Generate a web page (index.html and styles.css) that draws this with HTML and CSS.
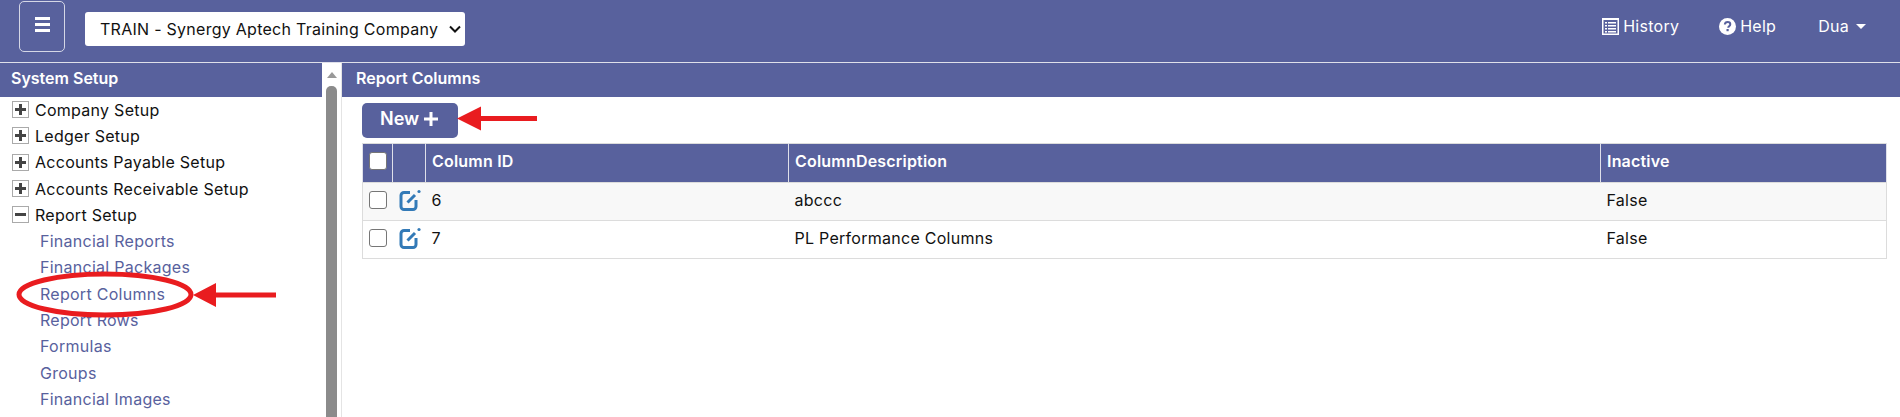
FILE: index.html
```html
<!DOCTYPE html>
<html>
<head>
    <title>Report Columns</title>
    <link rel="stylesheet" href="styles.css">
</head>
<body>
<div class="topbar">
    <button class="menu-button">
        <svg width="15" height="15" viewBox="0 0 15 15"><path d="M0 0h15v3H0zM0 6h15v3H0zM0 12h15v3H0z" fill="#fff"/></svg>
    </button>
    <div class="select-wrap">
        <select class="company-select">
            <option>TRAIN - Synergy Aptech Training Company</option>
        </select>
        <svg class="select-arrow" width="12" height="8" viewBox="0 0 12 8"><path d="M1 1.500l5 5 5-5" fill="none" stroke="#111" stroke-width="2"/></svg>
    </div>
    <div class="topbar-links">
        <a class="top-link link-history">
            <svg width="17" height="17" viewBox="0 0 17 17"><path fill="#fff" fill-rule="evenodd" d="M0 0h17v17H0zM1.500 2v13.500h14V2zM3 4h2v1.500H3zM6 4h8v1.500H6zM3 7h2v1.500H3zM6 7h8v1.500H6zM3 10h2v1.500H3zM6 10h8v1.500H6zM3 13h2v1.500H3zM6 13h8v1.500H6z"/></svg>
            History
        </a>
        <a class="top-link link-help">
            <svg width="17" height="17" viewBox="0 0 17 17"><circle cx="8.500" cy="8.500" r="8.500" fill="#fff"/><path d="M5.800 6.500c.2-1.700 1.300-2.500 2.800-2.500s2.700.9 2.700 2.300c0 1.900-2.100 1.900-2.100 3.400" fill="none" stroke="#58619d" stroke-width="2"/><rect x="7.500" y="11" width="2.200" height="2.200" fill="#58619d"/></svg>
            Help
        </a>
        <a class="top-link link-user">Dua <span class="caret"></span></a>
    </div>
</div>

<div class="page">
    <div class="sidebar">
        <div class="panel-title">System Setup</div>
        <ul class="tree">
            <li class="tree-node"><span class="toggle"><svg width="11" height="11" viewBox="0 0 11 11"><path d="M4 0h3v4h4v3H7v4H4V7H0V4h4z" fill="#444"/></svg></span>Company Setup</li>
            <li class="tree-node"><span class="toggle"><svg width="11" height="11" viewBox="0 0 11 11"><path d="M4 0h3v4h4v3H7v4H4V7H0V4h4z" fill="#444"/></svg></span>Ledger Setup</li>
            <li class="tree-node"><span class="toggle"><svg width="11" height="11" viewBox="0 0 11 11"><path d="M4 0h3v4h4v3H7v4H4V7H0V4h4z" fill="#444"/></svg></span>Accounts Payable Setup</li>
            <li class="tree-node"><span class="toggle"><svg width="11" height="11" viewBox="0 0 11 11"><path d="M4 0h3v4h4v3H7v4H4V7H0V4h4z" fill="#444"/></svg></span>Accounts Receivable Setup</li>
            <li class="tree-node"><span class="toggle"><svg width="11" height="11" viewBox="0 0 11 11"><path d="M0 4h11v3H0z" fill="#444"/></svg></span>Report Setup</li>
            <li class="tree-leaf">Financial Reports</li>
            <li class="tree-leaf">Financial Packages</li>
            <li class="tree-leaf">Report Columns</li>
            <li class="tree-leaf">Report Rows</li>
            <li class="tree-leaf">Formulas</li>
            <li class="tree-leaf">Groups</li>
            <li class="tree-leaf">Financial Images</li>
        </ul>
    </div>
    <div class="scrollbar">
        <span class="scroll-up"></span>
        <span class="scroll-thumb"></span>
    </div>
    <div class="main">
        <div class="panel-title panel-title-main">Report Columns</div>
        <div class="content">
            <button class="new-button">New
                <svg width="14" height="14" viewBox="0 0 14 14"><path d="M5.500 0h3v5.500H14v3H8.500V14h-3V8.500H0v-3h5.500z" fill="#fff"/></svg>
            </button>
            <table class="grid">
                <colgroup>
                    <col class="col-check">
                    <col class="col-edit">
                    <col class="col-id">
                    <col class="col-desc">
                    <col>
                </colgroup>
                <thead>
                    <tr>
                        <th><input type="checkbox" class="check"></th>
                        <th></th>
                        <th>Column ID</th>
                        <th>ColumnDescription</th>
                        <th>Inactive</th>
                    </tr>
                </thead>
                <tbody>
                    <tr class="row-odd">
                        <td><input type="checkbox" class="check"></td>
                        <td class="edit-cell">
                            <svg width="22" height="22" viewBox="0 0 22 22"><path d="M11 3.500H5A3 3 0 0 0 2 6.500V17.500A3 3 0 0 0 5 20.500H14A3 3 0 0 0 17 17.500V11" fill="none" stroke="#337ab7" stroke-width="3"/><path d="M8.500 13.500L16 6" fill="none" stroke="#337ab7" stroke-width="3"/><circle cx="20" cy="2.500" r="1.600" fill="#337ab7"/></svg>
                        </td>
                        <td>6</td>
                        <td>abccc</td>
                        <td>False</td>
                    </tr>
                    <tr>
                        <td><input type="checkbox" class="check"></td>
                        <td class="edit-cell">
                            <svg width="22" height="22" viewBox="0 0 22 22"><path d="M11 3.500H5A3 3 0 0 0 2 6.500V17.500A3 3 0 0 0 5 20.500H14A3 3 0 0 0 17 17.500V11" fill="none" stroke="#337ab7" stroke-width="3"/><path d="M8.500 13.500L16 6" fill="none" stroke="#337ab7" stroke-width="3"/><circle cx="20" cy="2.500" r="1.600" fill="#337ab7"/></svg>
                        </td>
                        <td>7</td>
                        <td>PL Performance Columns</td>
                        <td>False</td>
                    </tr>
                </tbody>
            </table>
        </div>
    </div>
</div>

<!-- red annotations drawn over the screenshot -->
<svg class="annotations" width="1900" height="417" viewBox="0 0 1900 417">
    <ellipse cx="105" cy="294.500" rx="86" ry="20.500" fill="none" stroke="#e91c1f" stroke-width="5"/>
    <path d="M193 295l23-12v9.500h60v5h-60v9.500z" fill="#e91c1f"/>
    <path d="M457 118.500l24-12v9.500h56v5h-56v9.500z" fill="#e91c1f"/>
</svg>
</body>
</html>
```
FILE: styles.css
```css
html, body {
    height: 417px;
    overflow: hidden;
}

body {
    margin: 0;
    font-family: Inter, "Liberation Sans", sans-serif;
    font-size: 16px;
    letter-spacing: 0.27px;
    color: #111;
    background-color: #fff;
}

.topbar {
    display: flex;
    align-items: flex-start;
    height: 62px;
    background-color: #58619d;
    border-bottom: 1px solid #dfe0ea;
}

.menu-button {
    display: flex;
    justify-content: center;
    padding: 15px 0 0;
    width: 46px;
    height: 51px;
    margin: 1px 0 0 19px;
    background-color: #58619d;
    border: 1px solid #d5d7e6;
    border-radius: 5px;
}

.select-wrap {
    position: relative;
    margin: 12px 0 0 20px;
}

.company-select {
    display: block;
    appearance: none;
    width: 380px;
    height: 34px;
    padding: 0 15px;
    font-family: inherit;
    font-size: 16px;
    letter-spacing: 0.27px;
    color: #111;
    background-color: #fff;
    border: 0;
    border-radius: 3px;
}

.select-arrow {
    position: absolute;
    top: 13px;
    right: 4px;
}

.topbar-links {
    display: flex;
    margin-left: auto;
    padding-top: 16px;
    color: #fff;
}

.top-link {
    display: flex;
    align-items: center;
    gap: 4px;
    height: 20px;
}

.link-history {
    margin-right: 40px;
}

.link-help {
    margin-right: 42px;
}

.link-user {
    gap: 7px;
    margin-right: 34px;
}

.caret {
    width: 0;
    height: 0;
    border-top: 5px solid #fff;
    border-left: 5px solid transparent;
    border-right: 5px solid transparent;
}

.page {
    display: flex;
    height: 354px;
}

.sidebar {
    width: 322px;
    flex-shrink: 0;
    overflow: hidden;
}

.panel-title {
    height: 34px;
    line-height: 30px;
    padding-left: 11px;
    font-weight: 600;
    letter-spacing: 0;
    color: #fff;
    background-color: #58619d;
}

.panel-title-main {
    padding-left: 14px;
}

.tree {
    list-style: none;
    margin: 0;
    padding: 0;
}

.tree-node,
.tree-leaf {
    display: flex;
    align-items: center;
    height: 26.300px;
    padding-bottom: 1px;
    box-sizing: border-box;
    white-space: nowrap;
}

.tree-node {
    padding-left: 12px;
}

.tree-leaf {
    padding-left: 40px;
    color: #58619d;
}

.toggle {
    display: flex;
    align-items: center;
    justify-content: center;
    width: 15px;
    height: 15px;
    margin-right: 6px;
    border: 1px solid #aaa;
}

.scrollbar {
    display: flex;
    flex-direction: column;
    align-items: center;
    width: 19px;
    flex-shrink: 0;
    border-right: 1px solid #e4e4e4;
}

.scroll-up {
    width: 0;
    height: 0;
    margin-top: 9px;
    border-bottom: 6px solid #999;
    border-left: 5px solid transparent;
    border-right: 5px solid transparent;
}

.scroll-thumb {
    width: 11px;
    flex: 1;
    margin-top: 8px;
    background-color: #8b8b8b;
    border-radius: 5px 5px 0 0;
}

.main {
    flex: 1;
}

.content {
    padding: 6px 13px 0 20px;
}

.new-button {
    display: flex;
    align-items: center;
    gap: 5px;
    width: 96px;
    height: 35px;
    padding: 0 0 4px 18px;
    font-family: inherit;
    font-size: 18px;
    font-weight: 600;
    color: #fff;
    background-color: #58619d;
    border: 0;
    border-radius: 5px;
}

.grid {
    width: 100%;
    margin-top: 5px;
    table-layout: fixed;
    border-collapse: collapse;
}

.col-check {
    width: 30px;
}

.col-edit {
    width: 33px;
}

.col-id {
    width: 363px;
}

.col-desc {
    width: 812px;
}

.grid th,
.grid td {
    padding: 0 0 4px 6px;
    text-align: left;
    border: 1px solid #dcdcdc;
}

.grid th {
    height: 34px;
    font-weight: 600;
    letter-spacing: 0.2px;
    color: #fff;
    background-color: #58619d;
    border-left-color: #dfe0ea;
    border-right-color: #dfe0ea;
}

.grid td {
    height: 33px;
    border-left: 0;
    border-right: 0;
}

.grid td:first-child {
    border-left: 1px solid #dcdcdc;
}

.grid td:last-child {
    border-right: 1px solid #dcdcdc;
}

.row-odd td {
    background-color: #f8f8f8;
}

.check {
    display: block;
    appearance: none;
    width: 18px;
    height: 18px;
    margin: 0;
    background-color: #fff;
    border: 1px solid #767676;
    border-radius: 3px;
}

.edit-cell svg {
    display: block;
    margin-left: 0;
}

.annotations {
    position: absolute;
    top: 0;
    left: 0;
    pointer-events: none;
}
```
